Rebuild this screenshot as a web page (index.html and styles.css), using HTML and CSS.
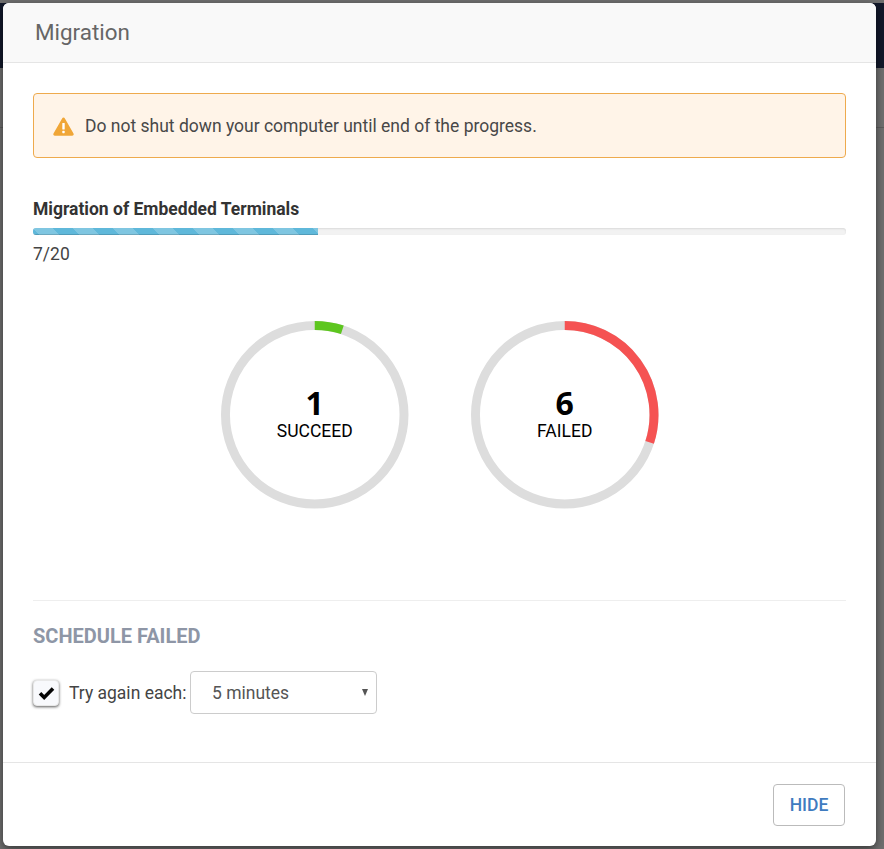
FILE: index.html
```html
<!DOCTYPE html>
<html lang="en">
<head>
<meta charset="utf-8">
<title>Migration</title>
<link rel="stylesheet" href="styles.css">
</head>
<body>
<div class="backdrop-nav"></div>
<div class="backdrop-line"></div>
<main class="modal">
  <header class="modal-header"><h1>Migration</h1></header>
  <section class="modal-body">
    <div class="alert">
      <svg class="alert-icon" width="21" height="19" viewBox="0 0 21 19"><path d="M10.5 0.6c.6 0 1.1.3 1.4.8l8.6 15.2c.6 1 -.1 2.2 -1.3 2.2H1.8c-1.2 0 -1.9-1.2 -1.3-2.2L9.1 1.4c.3-.5.8-.8 1.4-.8z" fill="#f0a637"/><rect x="9.3" y="6" width="2.4" height="6.6" rx=".6" fill="#fff"/><rect x="9.3" y="13.8" width="2.4" height="2.4" rx=".6" fill="#fff"/></svg>
      <span>Do not shut down your computer until end of the progress.</span>
    </div>
    <h2 class="progress-title">Migration of Embedded Terminals</h2>
    <div class="progress"><div class="progress-bar"></div></div>
    <div class="progress-count">7/20</div>
    <div class="rings">
      <div class="ring">
        <svg width="187.5" height="187.5" viewBox="0 0 188 188"><circle cx="94" cy="94" r="89.5" class="track"/><path d="M94 4.5A89.5 89.5 0 0 1 121.66 8.88" class="arc-ok"/></svg>
        <div class="ring-label"><strong>1</strong><span>SUCCEED</span></div>
      </div>
      <div class="ring">
        <svg width="187.5" height="187.5" viewBox="0 0 188 188"><circle cx="94" cy="94" r="89.5" class="track"/><path d="M94 4.5A89.5 89.5 0 0 1 179.12 121.66" class="arc-fail"/></svg>
        <div class="ring-label"><strong>6</strong><span>FAILED</span></div>
      </div>
    </div>
    <hr class="divider">
    <h3 class="schedule-title">SCHEDULE FAILED</h3>
    <div class="schedule-row">
      <span class="checkbox"><svg width="17" height="14" viewBox="0 0 17 14"><path d="M2 7.2l4.2 4.2L15 2.6" fill="none" stroke="#050505" stroke-width="3.6"/></svg></span>
      <span class="schedule-label">Try again each:</span>
      <div class="select"><span>5 minutes</span><i class="caret"></i></div>
    </div>
  </section>
  <footer class="modal-footer"><button class="hide-btn" type="button">HIDE</button></footer>
</main>
</body>
</html>
```
FILE: styles.css
```css
* { box-sizing: border-box; }
html, body { height: 100%; }
body {
  margin: 0;
  padding: 3px 8px 3px 3px;
  background: #6f6f6f;
  font-family: Roboto, "Liberation Sans", sans-serif;
  color: #444;
  overflow: hidden;
  position: relative;
}
.backdrop-nav {
  position: absolute;
  left: 0; right: 0; top: 3px;
  height: 65px;
  background: #12182a;
}
.backdrop-line {
  position: absolute;
  left: 0; right: 0; top: 127px;
  height: 1px;
  background: #5c5c5c;
}
.modal {
  position: relative;
  width: 873px;
  height: 843px;
  background: #fff;
  border-radius: 6px;
  box-shadow: 0 3px 9px rgba(0,0,0,.5);
  display: flex;
  flex-direction: column;
  overflow: hidden;
}
.modal-header {
  height: 60px;
  flex: none;
  background: #f9f9f9;
  border-bottom: 1px solid #e5e5e5;
  padding: 0 32px 2px;
  display: flex;
  align-items: center;
}
.modal-header h1 {
  margin: 0;
  font-size: 22.4px;
  font-weight: 400;
  color: #666;
}
.modal-body {
  flex: 1;
  padding: 30px 30px 0;
}
.alert {
  height: 65px;
  background: #fff4e8;
  border: 1px solid #eeaa4d;
  border-radius: 4px;
  display: flex;
  align-items: center;
  gap: 11px;
  padding: 0 19px;
  font-size: 17.5px;
  color: #484848;
}
.alert-icon { flex: none; margin-top: 1px; }
.progress-title {
  margin: 41px 0 0;
  font-size: 17.5px;
  line-height: 20px;
  font-weight: 700;
  color: #333;
}
.progress {
  margin-top: 9px;
  height: 7px;
  border-radius: 3px;
  background: #f2f2f2;
  box-shadow: inset 0 1px 2px rgba(0,0,0,.1);
  overflow: hidden;
}
.progress-bar {
  width: 35%;
  height: 100%;
  background-color: #5fb8da;
  background-image: linear-gradient(45deg, rgba(255,255,255,.2) 25%, transparent 25%, transparent 50%, rgba(255,255,255,.2) 50%, rgba(255,255,255,.2) 75%, transparent 75%, transparent);
  background-size: 40px 40px;
  box-shadow: inset 0 -1px 0 rgba(0,0,0,.15);
}
.progress-count {
  margin-top: 9px;
  font-size: 17.5px;
  line-height: 21px;
  color: #444;
}
.rings {
  margin-top: 56px;
  display: flex;
  justify-content: flex-start;
  gap: 62.5px;
  padding-left: 188px;
}
.ring {
  position: relative;
  width: 187.5px;
  height: 187.5px;
}
.ring svg { display: block; }
.track { fill: none; stroke: #dddddd; stroke-width: 9; }
.arc-ok { fill: none; stroke: #5dc61f; stroke-width: 9; }
.arc-fail { fill: none; stroke: #f55252; stroke-width: 9; }
.ring-label {
  position: absolute;
  left: 0; right: 0; top: 64px;
  display: flex;
  flex-direction: column;
  align-items: center;
  color: #000;
}
.ring-label strong {
  font-family: "Noto Sans", "Open Sans", sans-serif;
  font-size: 32px;
  line-height: 36px;
  font-weight: 700;
}
.ring-label span {
  font-size: 17.5px;
  line-height: 20px;
}
.divider {
  margin: 91.5px 0 0;
  border: 0;
  border-top: 1px solid #eee;
}
.schedule-title {
  margin: 24px 0 0;
  font-size: 20px;
  line-height: 23px;
  font-weight: 700;
  color: #8e96a6;
}
.schedule-row {
  margin-top: 23px;
  display: flex;
  align-items: center;
}
.checkbox {
  width: 26px;
  height: 26px;
  border-radius: 4px;
  background: #f8f9fc;
  border: 1px solid #e8e8e8;
  box-shadow: 0 1px 3px rgba(0,0,0,.65);
  display: flex;
  align-items: center;
  justify-content: center;
  margin-right: 10px;
}
.schedule-label {
  font-size: 17.5px;
  color: #444;
  margin-right: 3.5px;
}
.select {
  width: 187px;
  height: 43px;
  border: 1px solid #ccc;
  border-radius: 4px;
  display: flex;
  align-items: center;
  justify-content: space-between;
  padding: 0 8px 0 21px;
  font-size: 17.5px;
  color: #555;
}
.caret {
  width: 0;
  height: 0;
  border-left: 3.5px solid transparent;
  border-right: 3.5px solid transparent;
  border-top: 7px solid #555;
}
.modal-footer {
  height: 84px;
  flex: none;
  border-top: 1px solid #e5e5e5;
  display: flex;
  justify-content: flex-end;
  align-items: flex-start;
  padding: 21px 31px 0 0;
}
.hide-btn {
  width: 72px;
  height: 42px;
  background: #fff;
  border: 1px solid #bbb;
  border-radius: 4px;
  font-family: Roboto, "Liberation Sans", sans-serif;
  font-size: 17.5px;
  font-weight: 500;
  color: #3f7bbf;
  padding: 0;
}
```
